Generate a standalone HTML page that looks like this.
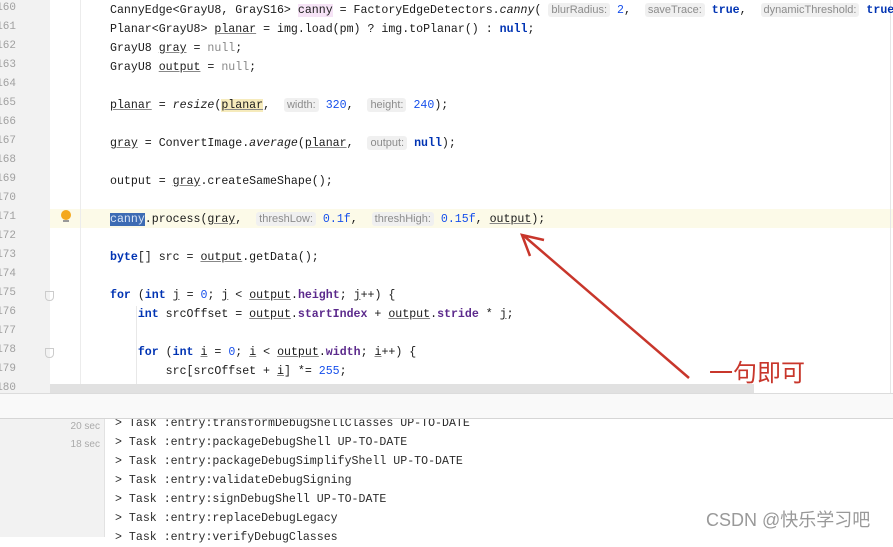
<!DOCTYPE html>
<html><head><meta charset="utf-8"><style>
body{margin:0;width:893px;height:537px;overflow:hidden;background:#fff;position:relative;font-family:"Liberation Mono",monospace;}
.g{position:absolute;left:0;top:0;width:50px;height:394px;background:#f2f2f2;}
.sep{position:absolute;left:80px;top:0;width:1px;height:394px;background:#ececec;}
.ln{position:absolute;left:-14px;width:30px;text-align:right;font-size:11px;color:#a0a0a0;line-height:19px;}
.c{position:absolute;left:110px;font-size:11.6px;line-height:19px;color:#1a1a1a;white-space:pre;}
.k{color:#0033b3;font-weight:bold}
.n{color:#1750eb}
.u{text-decoration:underline;text-decoration-color:#888}
.f{color:#5c2a8c;font-weight:bold}
.h{font-family:"Liberation Sans",sans-serif;font-size:11px;color:#8c8c8c;background:#f0f0f0;padding:1px 3px;border-radius:3px;}
.i{font-style:italic}
.t{position:absolute;left:115px;font-size:11.6px;line-height:19px;color:#2b2b2b;white-space:pre;}
</style></head><body>
<div class="t" style="top:414px">&gt; Task :entry:transformDebugShellClasses UP-TO-DATE</div>
<div class="t" style="top:433px">&gt; Task :entry:packageDebugShell UP-TO-DATE</div>
<div class="t" style="top:452px">&gt; Task :entry:packageDebugSimplifyShell UP-TO-DATE</div>
<div class="t" style="top:471px">&gt; Task :entry:validateDebugSigning</div>
<div class="t" style="top:490px">&gt; Task :entry:signDebugShell UP-TO-DATE</div>
<div class="t" style="top:509px">&gt; Task :entry:replaceDebugLegacy</div>
<div class="t" style="top:528px">&gt; Task :entry:verifyDebugClasses</div>
<div style="position:absolute;left:0;top:0;width:893px;height:394px;background:#fff"></div>
<div class="g"></div>
<div style="position:absolute;left:50px;top:209px;width:843px;height:19px;background:#fcfae8"></div>
<div class="sep"></div>
<div style="position:absolute;left:890px;top:0;width:1px;height:394px;background:#e6e6e6"></div>
<div class="ln" style="top:-1px">160</div><div class="ln" style="top:18px">161</div><div class="ln" style="top:37px">162</div><div class="ln" style="top:56px">163</div><div class="ln" style="top:75px">164</div><div class="ln" style="top:94px">165</div><div class="ln" style="top:113px">166</div><div class="ln" style="top:132px">167</div><div class="ln" style="top:151px">168</div><div class="ln" style="top:170px">169</div><div class="ln" style="top:189px">170</div><div class="ln" style="top:208px">171</div><div class="ln" style="top:227px">172</div><div class="ln" style="top:246px">173</div><div class="ln" style="top:265px">174</div><div class="ln" style="top:284px">175</div><div class="ln" style="top:303px">176</div><div class="ln" style="top:322px">177</div><div class="ln" style="top:341px">178</div><div class="ln" style="top:360px">179</div><div class="ln" style="top:379px">180</div>
<div style="position:absolute;left:61px;top:210px;width:10px;height:10px;border-radius:50%;background:#f4a81d"></div>
<div style="position:absolute;left:63px;top:220px;width:6px;height:2px;background:#999"></div>
<div style="position:absolute;left:45px;top:291px;width:7px;height:8px;border:1px solid #ccc;border-radius:0 0 4px 4px"></div>
<div style="position:absolute;left:45px;top:348px;width:7px;height:8px;border:1px solid #ccc;border-radius:0 0 4px 4px"></div>
<div style="position:absolute;left:136px;top:306px;width:1px;height:80px;background:#e8e8e8"></div>
<div class="c" style="top:1px">CannyEdge&lt;GrayU8, GrayS16&gt; <span style="background:#f6e3f6">canny</span> = FactoryEdgeDetectors.<span class="i">canny</span>( <span class="h">blurRadius:</span> <span class="n">2</span>,  <span class="h">saveTrace:</span> <span class="k">true</span>,  <span class="h">dynamicThreshold:</span> <span class="k">true</span>, G</div>
<div class="c" style="top:20px">Planar&lt;GrayU8&gt; <span class="u">planar</span> = img.load(pm) ? img.toPlanar() : <span class="k">null</span>;</div>
<div class="c" style="top:39px">GrayU8 <span class="u">gray</span> = <span style="color:#888">null</span>;</div>
<div class="c" style="top:58px">GrayU8 <span class="u">output</span> = <span style="color:#888">null</span>;</div>
<div class="c" style="top:96px"><span class="u">planar</span> = <span class="i">resize</span>(<span class="u" style="background:#f6ebbc">planar</span>,  <span class="h">width:</span> <span class="n">320</span>,  <span class="h">height:</span> <span class="n">240</span>);</div>
<div class="c" style="top:134px"><span class="u">gray</span> = ConvertImage.<span class="i">average</span>(<span class="u">planar</span>,  <span class="h">output:</span> <span class="k">null</span>);</div>
<div class="c" style="top:172px">output = <span class="u">gray</span>.createSameShape();</div>
<div class="c" style="top:210px"><span style="background:#3d6bb3;color:#d8e4f6">canny</span>.process(<span class="u">gray</span>,  <span class="h">threshLow:</span> <span class="n">0.1f</span>,  <span class="h">threshHigh:</span> <span class="n">0.15f</span>, <span class="u">output</span>);</div>
<div class="c" style="top:248px"><span class="k">byte</span>[] src = <span class="u">output</span>.getData();</div>
<div class="c" style="top:286px"><span class="k">for</span> (<span class="k">int</span> <span class="u">j</span> = <span class="n">0</span>; <span class="u">j</span> &lt; <span class="u">output</span>.<span class="f">height</span>; <span class="u">j</span>++) {</div>
<div class="c" style="top:305px">    <span class="k">int</span> srcOffset = <span class="u">output</span>.<span class="f">startIndex</span> + <span class="u">output</span>.<span class="f">stride</span> * <span class="u">j</span>;</div>
<div class="c" style="top:343px">    <span class="k">for</span> (<span class="k">int</span> <span class="u">i</span> = <span class="n">0</span>; <span class="u">i</span> &lt; <span class="u">output</span>.<span class="f">width</span>; <span class="u">i</span>++) {</div>
<div class="c" style="top:362px">        src[srcOffset + <span class="u">i</span>] *= <span class="n">255</span>;</div>
<div class="c" style="top:381px">    }</div>
<div style="position:absolute;left:50px;top:384px;width:704px;height:10px;background:#e1e1e1"></div>
<div style="position:absolute;left:0;top:393px;width:893px;height:1px;background:#dcdcdc"></div>
<div style="position:absolute;left:0;top:394px;width:893px;height:24px;background:#f9f9f9"></div>
<div style="position:absolute;left:0;top:418px;width:893px;height:1px;background:#d6d6d6"></div>
<div style="position:absolute;left:0;top:419px;width:104px;height:118px;background:#f2f2f2"></div>
<div style="position:absolute;left:104px;top:419px;width:1px;height:118px;background:#e2e2e2"></div>
<div style="position:absolute;left:60px;top:421px;width:40px;text-align:right;font:10px 'Liberation Sans',sans-serif;color:#aaa">20 sec</div>
<div style="position:absolute;left:60px;top:439px;width:40px;text-align:right;font:10px 'Liberation Sans',sans-serif;color:#aaa">18 sec</div>
<svg style="position:absolute;left:0;top:0" width="893" height="537"><line x1="689" y1="378" x2="524" y2="236" stroke="#c8362b" stroke-width="2.5"/><polyline points="530,256 522,235 544,240" fill="none" stroke="#c8362b" stroke-width="2.5"/></svg>
<div style="position:absolute;left:709px;top:355px;font:24px 'Noto Sans CJK SC',sans-serif;color:#c8362b;line-height:32px">一句即可</div>
<div style="position:absolute;left:706px;top:506px;font:18px 'Liberation Sans','Noto Sans CJK SC',sans-serif;color:#999;white-space:nowrap">CSDN @快乐学习吧</div>
</body></html>
